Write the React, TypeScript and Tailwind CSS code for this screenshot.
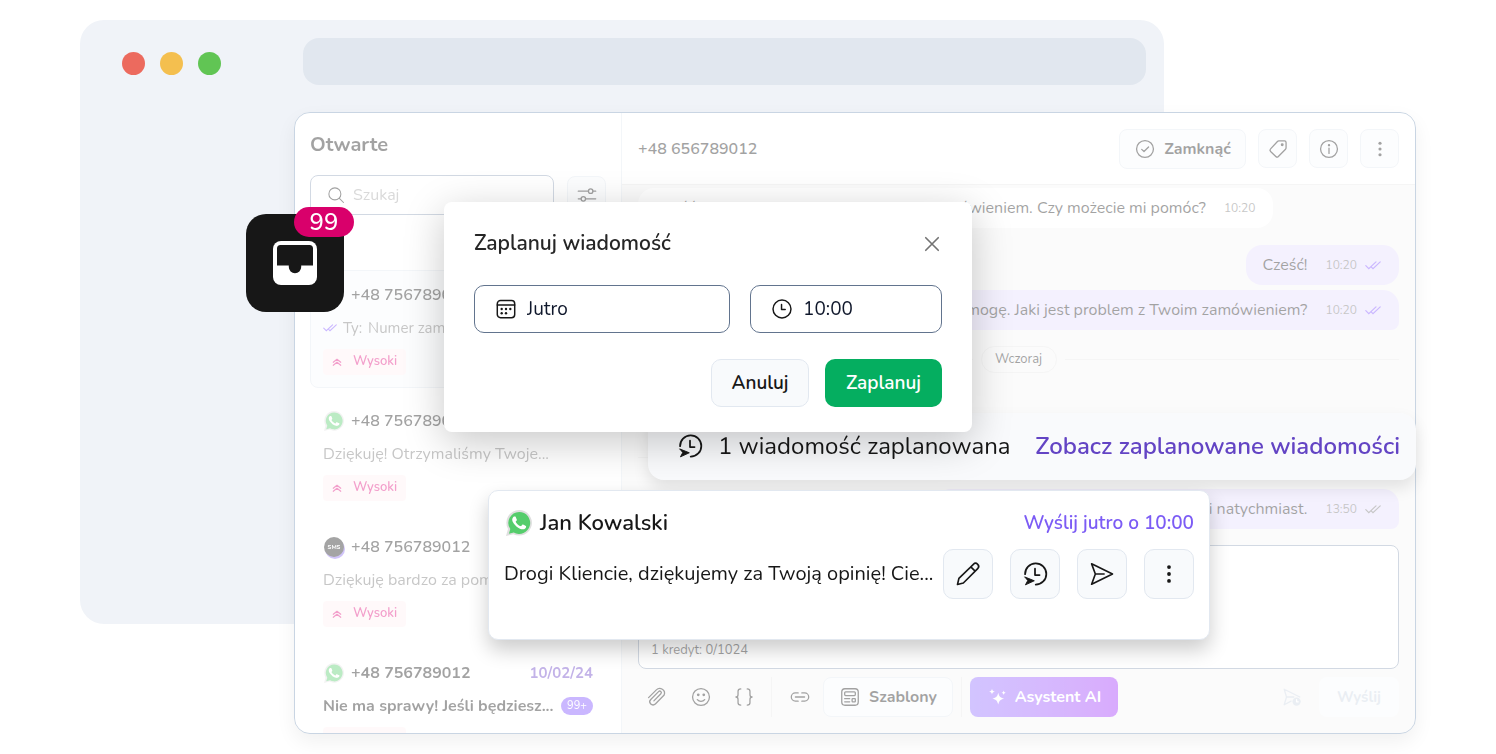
import React from 'react';
import clsx from 'clsx';

type IconProps = {
  className?: string;
  stroke?: number;
  children: React.ReactNode;
};

function Icon({ className = 'size-[22px]', stroke = 1.4, children }: IconProps) {
  return (
    <svg
      viewBox="0 0 24 24"
      fill="none"
      stroke="currentColor"
      strokeWidth={stroke}
      strokeLinecap="round"
      strokeLinejoin="round"
      aria-hidden="true"
      className={clsx('shrink-0', className)}
    >
      {children}
    </svg>
  );
}

const DotsIcon = ({ className }: { className?: string }) => (
  <Icon className={className}>
    <g fill="currentColor" stroke="none">
      <circle cx="12" cy="5.1" r="1.9" />
      <circle cx="12" cy="12" r="1.9" />
      <circle cx="12" cy="18.9" r="1.9" />
    </g>
  </Icon>
);

const ScheduleIcon = ({ className }: { className?: string }) => (
  <Icon className={className} stroke={1.5}>
    <path d="M3.500 12.200a9.100 9.100 0 1 1 9.100 8.900" />
    <path d="M12 7.400v5.500h3.900" />
    <path d="M3.400 14.600l8 3.200-7.600 3.500 1.900-3.500z" fill="currentColor" strokeWidth=".8" />
  </Icon>
);

const ChecksIcon = ({ className }: { className?: string }) => (
  <svg viewBox="0 0 16 9" fill="none" stroke="currentColor" strokeWidth="1.2" strokeLinecap="round" aria-hidden="true" className={clsx('shrink-0', className)}>
    <path d="M.8 4.600l3 3.100L11 .9M6.400 6.100L8 7.700 15.200.9" />
  </svg>
);

const WhatsAppIcon = ({ className }: { className?: string }) => (
  <svg viewBox="0 0 26 26" aria-hidden="true" className={clsx('shrink-0', className)}>
    <path d="M13.200 0a12.800 12.800 0 1 1-5.900 24.200L0 26l2-6.900A12.800 12.800 0 0 1 13.200 0z" fill="#dfdfdf" />
    <path d="M13.200 1.900a11 11 0 1 1-5.400 20.600l-4.900 1.300 1.400-4.700A11 11 0 0 1 13.200 1.900z" fill="#55cd6c" />
    <path
      transform="translate(-.7 -.9) scale(1.15)"
      fill="#fff"
      d="M17.472 14.382c-.297-.149-1.758-.867-2.03-.967-.273-.099-.471-.148-.67.15-.197.297-.767.966-.94 1.164-.173.199-.347.223-.644.075-.297-.15-1.255-.463-2.39-1.475-.883-.788-1.48-1.761-1.653-2.059-.173-.297-.018-.458.13-.606.134-.133.298-.347.446-.52.149-.174.198-.298.298-.497.099-.198.05-.371-.025-.52-.075-.149-.669-1.612-.916-2.207-.242-.579-.487-.5-.669-.51-.173-.008-.371-.01-.57-.01-.198 0-.52.074-.792.372-.272.297-1.04 1.016-1.04 2.479 0 1.462 1.065 2.875 1.213 3.074.149.198 2.096 3.2 5.077 4.487.709.306 1.262.489 1.694.625.712.227 1.36.195 1.871.118.571-.085 1.758-.719 2.006-1.413.248-.694.248-1.289.173-1.413-.074-.124-.272-.198-.57-.347"
    />
  </svg>
);

const SmsIcon = () => (
  <span className="flex size-5 shrink-0 items-center justify-center rounded-full bg-[#1c1c1c] text-[6px] font-bold text-white shadow-[1px_2px_0_#8b6cf0]">
    SMS
  </span>
);

type Chat = {
  channel: 'whatsapp' | 'sms';
  phone: string;
  text: string;
  selected?: boolean;
  date?: string;
  unread?: string;
};

const chats: Chat[] = [
  { channel: 'whatsapp', phone: '+48 756789012', text: 'Numer zamówienia to 4521', selected: true },
  { channel: 'whatsapp', phone: '+48 756789012', text: 'Dziękuję! Otrzymaliśmy Twoje...' },
  { channel: 'sms', phone: '+48 756789012', text: 'Dziękuję bardzo za pomoc!' },
  { channel: 'whatsapp', phone: '+48 756789012', text: 'Nie ma sprawy! Jeśli będziesz...', date: '10/02/24', unread: '99+' },
];

function ChatItem({ chat }: { chat: Chat }) {
  return (
    <li className={clsx('h-[118px] rounded-lg border px-3 pt-3', chat.selected ? 'border-slate-200 bg-slate-50' : 'border-transparent')}>
      <div className="flex h-6 items-center gap-1.5">
        <span className="flex w-[22px] justify-center">
          {chat.channel === 'sms' ? <SmsIcon /> : <WhatsAppIcon className="size-5" />}
        </span>
        <span className={clsx('text-base', chat.unread ? 'font-bold' : 'font-semibold')}>{chat.phone}</span>
        {chat.date && <span className="ml-auto text-[15px] font-bold text-[#6941c6]">{chat.date}</span>}
      </div>
      <div className="mt-[9px] flex h-6 items-center">
        {chat.selected && (
          <>
            <ChecksIcon className="mr-1.5 w-3.5 text-[#7c4dff]" />
            <span className="mr-1.5 text-[15px] text-neutral-500">Ty:</span>
          </>
        )}
        <span className={clsx('whitespace-nowrap', chat.selected ? 'text-[15px]' : 'text-base', chat.unread ? 'font-bold' : 'text-neutral-500')}>
          {chat.text}
        </span>
        {chat.unread && (
          <span className="ml-auto flex h-[18px] w-8 shrink-0 items-center justify-center rounded-full bg-[#7c4dff] text-[11px] text-white">{chat.unread}</span>
        )}
      </div>
      <span className="mt-[9px] flex h-[26px] w-[83px] items-center gap-2.5 rounded bg-rose-50 pl-2 text-[13px] font-semibold text-[#e0117f]">
        <Icon className="size-3" stroke={2.4}>
          <path d="M4.500 12.500L12 6.500l7.500 6M4.500 18.500l7.500-6 7.500 6" />
        </Icon>
        Wysoki
      </span>
    </li>
  );
}

type BubbleProps = {
  text: string;
  time: string;
  incoming?: boolean;
  unread?: boolean;
  className?: string;
};

function Bubble({ text, time, incoming, unread, className }: BubbleProps) {
  return (
    <div
      className={clsx(
        'flex h-10 items-center whitespace-nowrap rounded-2xl pl-4 pr-[18px]',
        incoming ? 'self-start bg-white' : 'self-end bg-[#e4dcfd]',
        className,
      )}
    >
      <span className="text-base">{text}</span>
      <span className="ml-[18px] text-xs text-neutral-500">{time}</span>
      {!incoming && <ChecksIcon className={clsx('ml-2 w-4', unread ? 'text-neutral-500' : 'text-[#7c4dff]')} />}
    </div>
  );
}

const toolButton = 'flex items-center justify-center rounded-lg border border-slate-200 bg-slate-50';

function Sidebar() {
  return (
    <aside className="w-[327px] shrink-0 overflow-hidden border-r border-slate-200 bg-white px-[15px] pt-[18px] [contain:size]">
      <h1 className="text-xl/7 font-bold">Otwarte</h1>
      <div className="mt-4 flex items-center gap-[13px]">
        <label className="flex h-10 w-[245px] items-center gap-2 rounded-lg border border-slate-400 px-4">
          <Icon className="size-[18px]">
            <circle cx="10.500" cy="10.500" r="8" />
            <path d="M16.500 16.500L22 22" />
          </Icon>
          <input type="search" aria-label="Szukaj" placeholder="Szukaj" className="w-full min-w-0 text-base outline-none placeholder:text-neutral-400" />
        </label>
        <button type="button" aria-label="Filtry" className={clsx(toolButton, 'size-[39px]')}>
          <Icon>
            <path d="M2.500 7.800h11M18.500 7.800h3M2.500 16.200h3M10.500 16.200h11" />
            <circle cx="16" cy="7.800" r="2.400" />
            <circle cx="8" cy="16.200" r="2.400" />
          </Icon>
        </button>
      </div>
      <ul className="mt-[55px] space-y-2">
        {chats.map((chat, i) => (
          <ChatItem key={i} chat={chat} />
        ))}
      </ul>
    </aside>
  );
}

function Conversation() {
  return (
    <section className="flex min-w-0 flex-1 flex-col bg-neutral-100">
      <header className="flex h-[72px] items-center gap-3 border-b border-neutral-200 bg-white px-4">
        <h2 className="text-base font-semibold">+48 656789012</h2>
        <button type="button" className={clsx(toolButton, 'ml-auto h-10 w-[127px] gap-2 text-base font-bold')}>
          <Icon>
            <circle cx="12" cy="12" r="9.200" />
            <path d="M8.400 12.400l2.500 2.400 5-5" />
          </Icon>
          Zamknąć
        </button>
        <button type="button" aria-label="Etykiety" className={clsx(toolButton, 'size-[39px]')}>
          <Icon>
            <path d="M12.900 3.200h6.200a1.700 1.700 0 0 1 1.700 1.700v5.800a2 2 0 0 1-.6 1.500l-7.800 8a2 2 0 0 1-2.800 0l-5.700-5.500a2 2 0 0 1 0-2.800l7.500-8.100a2 2 0 0 1 1.500-.6z" />
            <circle cx="16.600" cy="7.400" r=".9" fill="currentColor" />
          </Icon>
        </button>
        <button type="button" aria-label="Informacje" className={clsx(toolButton, 'size-[39px]')}>
          <Icon>
            <circle cx="12" cy="12" r="9.200" />
            <path d="M12 11v5.800" />
            <circle cx="12" cy="7.800" r=".6" fill="currentColor" />
          </Icon>
        </button>
        <button type="button" aria-label="Więcej" className={clsx(toolButton, 'size-[39px]')}>
          <DotsIcon className="size-5" />
        </button>
      </header>

      <div className="flex flex-col px-4 pb-4 pt-[3px]">
        <Bubble incoming text="Cześć! Mam spory problem z ostatnim zamówieniem. Czy możecie mi pomóc?" time="10:20" />
        <Bubble className="mt-[17px]" text="Cześć!" time="10:20" />
        <Bubble className="mt-[5px] rounded-br-lg" text="Oczywiście, pomogę. Jaki jest problem z Twoim zamówieniem?" time="10:20" />
        <div className="mt-4 flex items-center gap-2">
          <hr className="flex-1 border-neutral-200" />
          <span className="flex h-[27px] w-[76px] items-center justify-center rounded-full border border-neutral-200 text-[13px]">Wczoraj</span>
          <hr className="flex-1 border-neutral-200" />
        </div>
        <hr className="mt-[84px] border-neutral-200" />
        <Bubble unread className="mt-[31px] rounded-br-lg" text="Dziękujemy! Nasz zespół odpowie Ci natychmiast." time="13:50" />

        <div className="mt-4 flex h-[124px] flex-col rounded-lg border border-slate-400 bg-white px-3 pb-2">
          <textarea aria-label="Wiadomość" className="min-h-0 flex-1 resize-none outline-none" />
          <span className="text-[13px]/5">1 kredyt: 0/1024</span>
        </div>

        <div className="mt-2 flex h-10 items-center">
          <button type="button" aria-label="Załącz plik" className="mx-2">
            <Icon>
              <path d="M2.800 12.700l8.500-8.500a5.200 5.200 0 0 1 8.500 5.600l-9.600 9.900a3.500 3.500 0 0 1-5-5l8.500-8.600a1.700 1.700 0 0 1 2.500 2.400l-7.600 7.700" />
            </Icon>
          </button>
          <button type="button" aria-label="Emoji" className="ml-3.5">
            <Icon>
              <circle cx="12" cy="12" r="9.200" />
              <path d="M8 14.800c2 2.500 6 2.500 8 0" />
              <circle cx="9" cy="9.600" r=".8" fill="currentColor" />
              <circle cx="15" cy="9.600" r=".8" fill="currentColor" />
            </Icon>
          </button>
          <button type="button" aria-label="Zmienne" className="ml-[21px]">
            <Icon>
              <path d="M8.500 3.200c-2 0-3 .8-3 2.600v3.400c0 1.700-.8 2.800-2.300 2.800 1.500 0 2.300 1.100 2.300 2.800v3.400c0 1.800 1 2.600 3 2.600M15.500 3.200c2 0 3 .8 3 2.600v3.400c0 1.700.8 2.800 2.300 2.800-1.500 0-2.300 1.100-2.300 2.800v3.400c0 1.800-1 2.600-3 2.600" />
            </Icon>
          </button>
          <span className="ml-4 h-10 w-px bg-neutral-200" />
          <button type="button" aria-label="Link" className="ml-[17px]">
            <Icon>
              <path d="M10 7.500H7a4.500 4.500 0 0 0 0 9h3M14 7.500h3a4.500 4.500 0 0 1 0 9h-3M7 12h10" />
            </Icon>
          </button>
          <button type="button" className={clsx(toolButton, 'ml-3 h-10 w-[130px] gap-2 text-base font-bold')}>
            <Icon>
              <rect x="3" y="3" width="18" height="18" rx="3.500" />
              <rect x="6.200" y="6.400" width="11.600" height="4" rx="1" />
              <path d="M6.200 13.800h5.500M6.200 17.300h5.500" />
              <rect x="14.300" y="13.700" width="3.500" height="3.600" rx=".6" />
            </Icon>
            Szablony
          </button>
          <span className="ml-2 h-10 w-px bg-neutral-200" />
          <button type="button" className="ml-2 flex h-10 w-[148px] items-center justify-center gap-2 rounded-lg bg-linear-to-r from-[#8f6cff] to-[#9f2bf9] text-base font-bold text-white">
            <Icon className="size-5" stroke={0}>
              <path fill="currentColor" d="M13.500 7c1.200 4.800 2.200 5.800 7 7-4.800 1.200-5.800 2.200-7 7-1.200-4.800-2.200-5.800-7-7 4.800-1.200 5.800-2.200 7-7zM6 2c.6 2.400 1.100 2.900 3.500 3.500C7.100 6.100 6.600 6.600 6 9c-.6-2.400-1.100-2.900-3.500-3.500C4.900 4.900 5.400 4.400 6 2zM20 4.200c.5 1.800.9 2.200 2.700 2.700-1.800.5-2.200.9-2.700 2.700-.5-1.800-.9-2.200-2.700-2.700 1.800-.5 2.200-.9 2.700-2.700z" />
            </Icon>
            Asystent AI
          </button>
          <button type="button" disabled aria-label="Zaplanuj wysyłkę" className="ml-auto text-slate-300">
            <Icon>
              <path d="M11 16.500l-7.500 4L6 12 3.500 3.500l17 8.500M6 12h8" />
              <circle cx="17" cy="17" r="4.500" fill="currentColor" stroke="none" />
              <path d="M17 15v2.300h1.800" stroke="#fff" />
            </Icon>
          </button>
          <button type="button" disabled className="ml-4 h-10 w-20 rounded-lg bg-slate-50 text-[15px] font-bold text-slate-300">
            Wyślij
          </button>
        </div>
      </div>
    </section>
  );
}

function ScheduleDialog() {
  return (
    <div
      role="dialog"
      aria-labelledby="schedule-title"
      className="absolute left-[149px] top-[89px] z-30 w-[528px] rounded-lg bg-white px-[30px] py-[25px] shadow-[0_10px_40px_rgba(0,0,0,0.22)]"
    >
      <div className="flex h-[34px] items-center justify-between">
        <h2 id="schedule-title" className="text-[21px] font-semibold text-neutral-800">
          Zaplanuj wiadomość
        </h2>
        <button type="button" aria-label="Zamknij" className="text-neutral-500">
          <Icon className="size-5" stroke={2}>
            <path d="M4.500 4.500l15 15M19.500 4.500l-15 15" />
          </Icon>
        </button>
      </div>
      <div className="mt-6 grid grid-cols-[4fr_3fr] gap-5">
        <label className="flex h-12 items-center gap-2.5 rounded-[10px] border border-slate-500 px-5">
          <Icon stroke={1.6}>
            <rect x="2.500" y="2.800" width="19" height="18.700" rx="3.500" />
            <path d="M2.500 7.600h19" />
            <g fill="currentColor" stroke="none">
              <circle cx="7.300" cy="12" r="1.300" />
              <circle cx="12" cy="12" r="1.300" />
              <circle cx="16.700" cy="12" r="1.300" />
              <circle cx="7.300" cy="16.600" r="1.300" />
              <circle cx="12" cy="16.600" r="1.300" />
            </g>
          </Icon>
          <input type="text" aria-label="Dzień" defaultValue="Jutro" className="w-full min-w-0 text-[19px] text-slate-900 outline-none" />
        </label>
        <label className="flex h-12 items-center gap-2.5 rounded-[10px] border border-slate-500 px-5">
          <Icon stroke={1.6}>
            <circle cx="12" cy="12" r="9.800" />
            <path d="M11.500 7v5.500h4" />
          </Icon>
          <input type="text" aria-label="Godzina" defaultValue="10:00" className="w-full min-w-0 text-[19px] text-slate-900 outline-none" />
        </label>
      </div>
      <div className="mt-[26px] flex justify-end gap-4">
        <button type="button" className="h-12 w-[98px] rounded-[10px] border border-slate-200 bg-slate-50 text-[19px] font-semibold text-neutral-900">
          Anuluj
        </button>
        <button type="button" className="h-12 w-[117px] rounded-[10px] bg-[#05ae60] text-[19px] font-semibold text-white">
          Zaplanuj
        </button>
      </div>
    </div>
  );
}

function ScheduledBanner() {
  return (
    <div className="absolute -right-px left-[353px] top-[300px] z-10 flex h-[67px] items-center justify-between whitespace-nowrap rounded-2xl bg-[#f9fafc] pb-0.5 pl-7 pr-4 text-2xl shadow-[0_8px_16px_rgba(0,0,0,0.1)]">
      <span className="flex items-center gap-3.5 text-neutral-900">
        <ScheduleIcon className="size-7" />
        1 wiadomość zaplanowana
      </span>
      <a href="#zaplanowane" className="font-semibold text-[#6344c4]">
        Zobacz zaplanowane wiadomości
      </a>
    </div>
  );
}

function ScheduledCard() {
  const action = 'flex size-[50px] shrink-0 items-center justify-center rounded-[10px] border border-slate-200 bg-slate-50';
  return (
    <article className="absolute left-[193px] top-[377px] z-20 h-[150px] w-[722px] rounded-[10px] border border-slate-200 bg-white px-[15px] pt-4 text-neutral-900 shadow-[0_10px_20px_rgba(0,0,0,0.2)]">
      <div className="flex h-8 items-center gap-2">
        <WhatsAppIcon className="ml-0.5 size-[26px]" />
        <h3 className="text-[22px] font-semibold">Jan Kowalski</h3>
        <span className="ml-auto text-[19px] font-semibold text-[#7c5cf5]">Wyślij jutro o 10:00</span>
      </div>
      <div className="mt-[10px] flex items-center justify-between">
        <p className="whitespace-nowrap text-xl">Drogi Kliencie, dziękujemy za Twoją opinię! Cie...</p>
        <div className="flex gap-[17px]">
          <button type="button" aria-label="Edytuj" className={action}>
            <Icon className="size-7">
              <path d="M3 21l1.200-5.200L16.600 3.700a2.600 2.600 0 0 1 3.700 3.700L8 19.700zM14.400 5.900l3.700 3.700" />
            </Icon>
          </button>
          <button type="button" aria-label="Zmień termin" className={action}>
            <ScheduleIcon className="size-7" />
          </button>
          <button type="button" aria-label="Wyślij teraz" className={action}>
            <Icon className="size-7">
              <path d="M3.100 3.300L21 12 3.100 20.800 6.300 12zM6.300 12h7.500" />
            </Icon>
          </button>
          <button type="button" aria-label="Więcej" className={action}>
            <DotsIcon className="size-6" />
          </button>
        </div>
      </div>
    </article>
  );
}

function AppBadge() {
  return (
    <div className="absolute -left-[49px] top-[101px] z-40 flex size-[98px] items-center justify-center rounded-[20px] bg-[#171717]">
      <svg viewBox="0 0 44 44" aria-hidden="true" className="size-11">
        <rect width="44" height="44" rx="8" fill="#fff" />
        <path d="M7.500 4h29A3.500 3.500 0 0 1 40 7.500V24.500H28.200V26a6.200 6.200 0 0 1-12.400 0v-1.500H4V7.500A3.500 3.500 0 0 1 7.500 4z" fill="#171717" />
      </svg>
      <span className="absolute -right-[10px] -top-[7px] flex h-[30px] w-[60px] items-center justify-center rounded-full bg-[#d9006b] text-2xl font-medium text-white">
        99
      </span>
    </div>
  );
}

export default function App() {
  return (
    <main className="relative min-h-screen overflow-hidden bg-white pb-5 pl-[294px] pr-20 pt-28 font-['Nunito','Open_Sans',sans-serif] text-neutral-900">
      {/* browser window behind the app */}
      <div className="absolute left-20 right-[332px] top-5 flex h-[604px] items-start rounded-3xl bg-[#f0f3f8] pl-[42px] pr-[18px] pt-[18px]">
        <div className="flex h-[47px] items-center gap-[15px] pt-1">
          <span className="size-[23px] rounded-full bg-[#ec6a5e]" />
          <span className="size-[23px] rounded-full bg-[#f4bf4f]" />
          <span className="size-[23px] rounded-full bg-[#61c554]" />
        </div>
        <div className="ml-[82px] h-[47px] flex-1 rounded-2xl bg-[#e1e7ef]" />
      </div>

      <div className="relative rounded-2xl border border-[#c9d5e3] bg-white shadow-[0_8px_20px_rgba(0,0,0,0.06)]">
        <div className="flex overflow-hidden rounded-[15px] opacity-40">
          <Sidebar />
          <Conversation />
        </div>
        <ScheduledBanner />
        <ScheduledCard />
        <ScheduleDialog />
        <AppBadge />
      </div>
    </main>
  );
}
